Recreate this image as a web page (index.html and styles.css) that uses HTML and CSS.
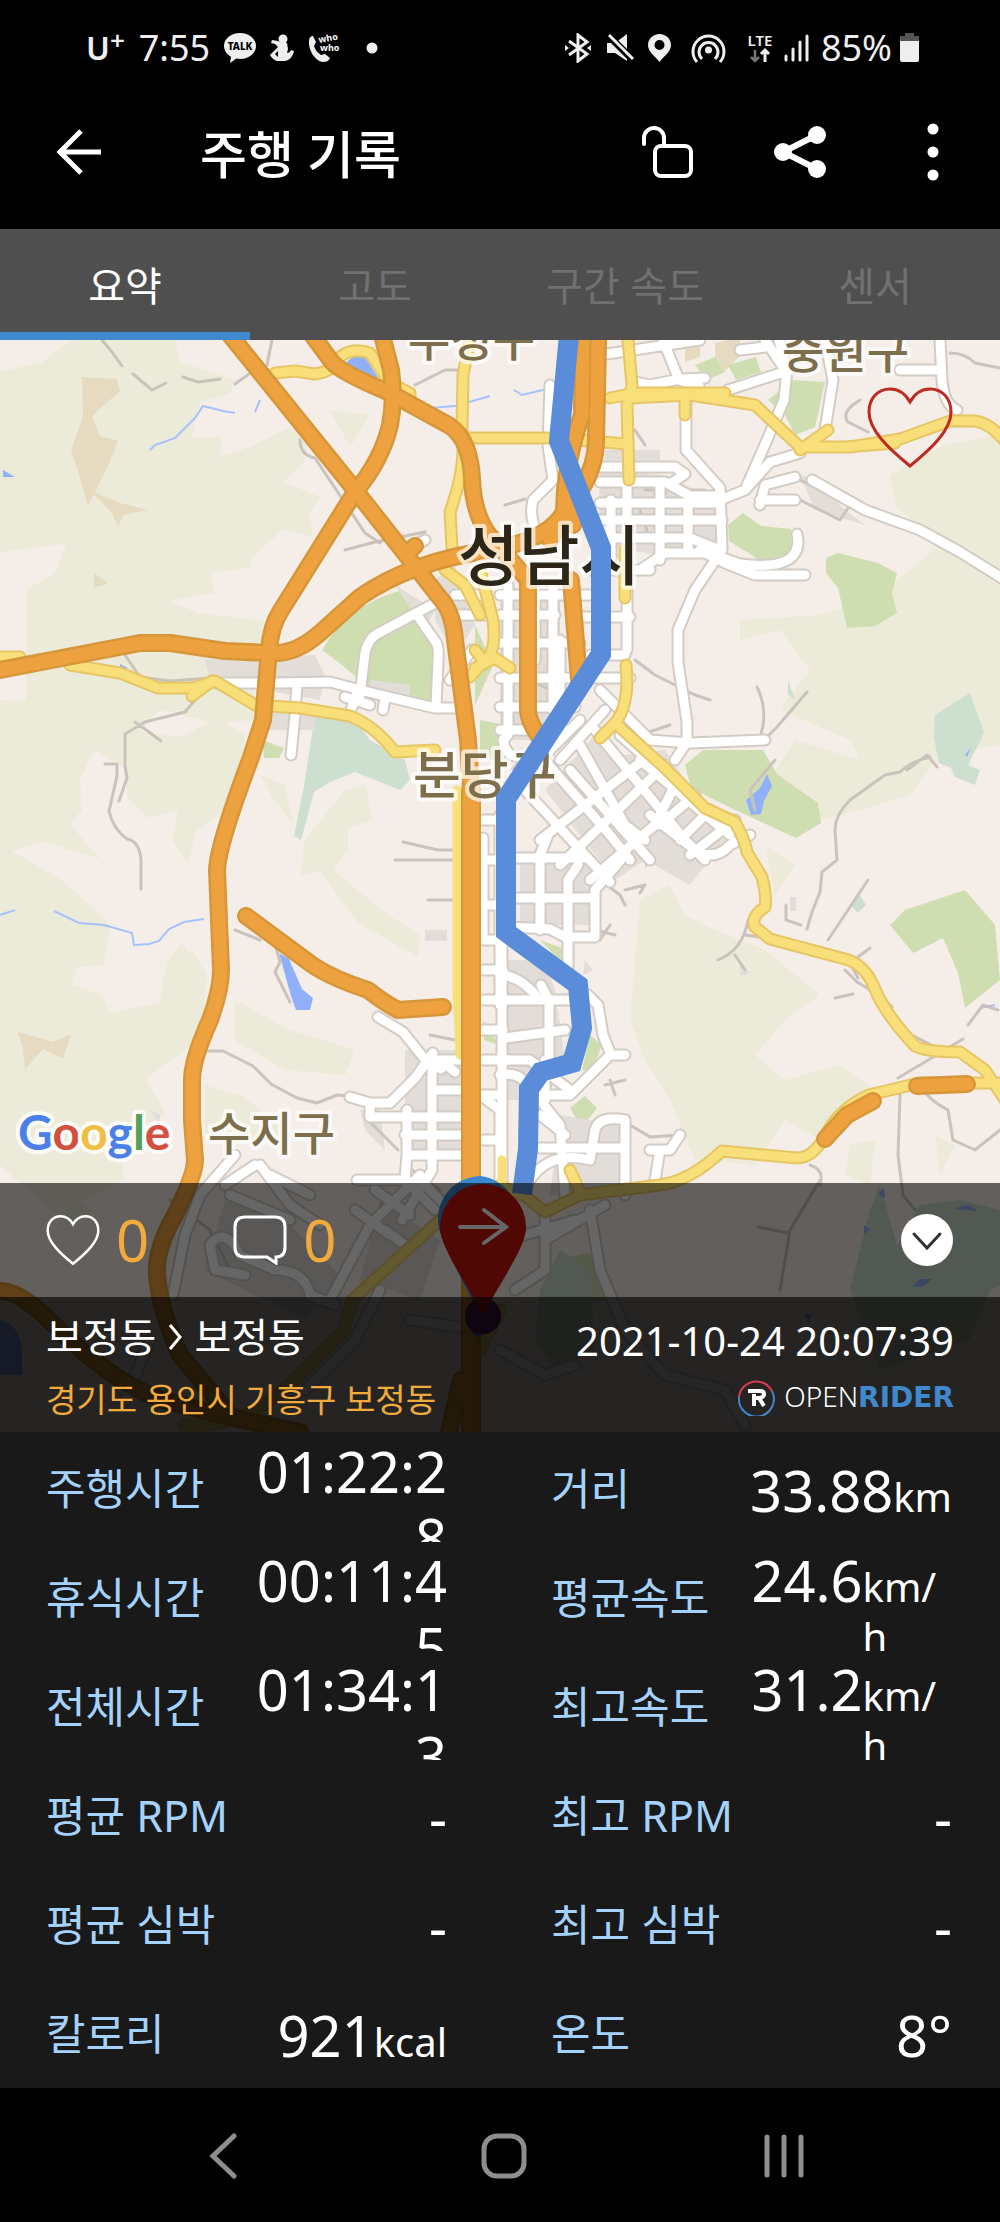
FILE: index.html
```html
<!DOCTYPE html>
<html lang="ko">
<head>
    <meta charset="UTF-8">
    <meta name="viewport" content="width=device-width, initial-scale=1.0">
    <title>주행 기록</title>
    <link rel="stylesheet" href="styles.css">
</head>
<body>
    <div class="status-bar">
        <div class="status-left">
            <span class="carrier">U<sup>+</sup></span>
            <span class="status-text">7:55</span>
            <svg width="32" height="30" viewBox="0 0 32 30">
                <path fill="#eee" d="M16 0C7 0 0 5.600 0 13c0 4.600 2.800 8.500 7 10.800L6 30l6.500-4.400c1.100.2 2.300.3 3.500.3 9 0 16-5.600 16-12.900S25 0 16 0z"/>
                <text class="talk-text" x="16" y="17" text-anchor="middle">TALK</text>
            </svg>
            <svg width="24" height="28" viewBox="0 0 24 28" fill="#eee">
                <circle cx="13" cy="5" r="4.500"/>
                <path d="M10 8l7 1 1 6-1 4c2 0 3-1 4-3l3 1c-1 5-4 9-9 10H7c-3-1-6-4-7-6l8-8-3-3-4-1 1-3 6 1z"/>
                <path fill="#000" d="M5 20l3-3v6z"/>
            </svg>
            <svg width="34" height="28" viewBox="0 0 34 28">
                <path fill="#eee" d="M1 6c0-2 2-4 4-4l3 6-2 4c1 4 4 7 7 9l4-1 5 4c-1 3-4 4-7 4C7 27 0 16 1 6z"/>
                <text class="who-text" x="11" y="9" transform="rotate(-10 11 9)">who</text>
                <text class="who-text" x="12" y="17">who</text>
            </svg>
            <svg width="22" height="28" viewBox="0 0 22 28"><circle cx="16" cy="14" r="5.500" fill="#eee"/></svg>
        </div>
        <div class="status-right">
            <svg width="32" height="30" viewBox="0 0 32 30" fill="none" stroke="#eee" stroke-width="3">
                <path d="M4 8l18 13-9 7V2l9 7L4 22"/>
                <path d="M0 12l4 3-4 3zM26 12l-4 3 4 3z" fill="#eee" stroke="none"/>
            </svg>
            <svg width="31" height="30" viewBox="0 0 31 30" fill="#eee">
                <path d="M0 10h8l12-9v27L8 20H0z"/>
                <path d="M1 2l25 25" stroke="#000" stroke-width="7"/>
                <path d="M2 2l24 24" stroke="#eee" stroke-width="3"/>
            </svg>
            <svg width="33" height="30" viewBox="0 0 33 30"><path fill="#eee" fill-rule="evenodd" d="M11.500 1C5 1 0 6 0 12c0 7 7 11 11.500 17C16 23 23 19 23 12 23 6 18 1 11.500 1zm0 6a5 5 0 1 1 0 10 5 5 0 0 1 0-10z"/></svg>
            <svg width="46" height="32" viewBox="0 0 46 32" fill="none" stroke="#eee" stroke-width="3">
                <path d="M6 30a15.500 15.500 0 1 1 23 0"/>
                <path d="M11 27a9.500 9.500 0 1 1 13 0"/>
                <circle cx="17.500" cy="18" r="3.500" fill="#eee" stroke="none"/>
            </svg>
            <svg width="27" height="32" viewBox="0 0 27 32">
                <text class="lte-text" x="13" y="14" text-anchor="middle">LTE</text>
                <path d="M8 18v10M4 25l4 4 4-4" fill="none" stroke="#777" stroke-width="2.500"/>
                <path d="M18 30V19M14 22l4-4 4 4" fill="none" stroke="#eee" stroke-width="3"/>
            </svg>
            <svg width="27" height="28" viewBox="0 0 27 28" stroke="#eee" stroke-width="3" stroke-linecap="round">
                <path d="M2 26v-4M9 26V15M16 26V8M23 26V2"/>
            </svg>
            <span class="battery">
                <span class="status-text">85%</span>
                <svg width="19" height="29" viewBox="0 0 19 29">
                    <path fill="#555" d="M5 0h9v3h5v5H0V3h5z"/>
                    <path fill="#eee" d="M0 8h19v19a2 2 0 0 1-2 2H2a2 2 0 0 1-2-2z"/>
                </svg>
            </span>
        </div>
    </div>

    <header class="app-bar">
        <button class="icon-btn back" aria-label="뒤로">
            <svg width="46" height="46" viewBox="0 0 46 46" fill="none" stroke="#fff" stroke-width="5"><path d="M25 2L4 23l21 21M4 23h41"/></svg>
        </button>
        <h1 class="title">주행 기록</h1>
        <button class="icon-btn" aria-label="잠금">
            <svg width="52" height="52" viewBox="0 0 52 52" fill="none" stroke="#fff" stroke-width="4" stroke-linecap="round">
                <path d="M3 18v-6a9.500 9.500 0 0 1 20 0v8"/>
                <rect x="14" y="20" width="36" height="30" rx="6"/>
            </svg>
        </button>
        <button class="icon-btn" aria-label="공유">
            <svg width="52" height="52" viewBox="0 0 52 52" fill="#fff">
                <path d="M43 9L9 26l34 17" fill="none" stroke="#fff" stroke-width="6"/>
                <circle cx="9" cy="26" r="9"/><circle cx="43" cy="9" r="9"/><circle cx="43" cy="43" r="9"/>
            </svg>
        </button>
        <button class="icon-btn" aria-label="더보기">
            <svg width="52" height="58" viewBox="0 0 52 58" fill="#fff"><circle cx="26" cy="6" r="5.500"/><circle cx="26" cy="29" r="5.500"/><circle cx="26" cy="52" r="5.500"/></svg>
        </button>
    </header>

    <nav class="tabs">
        <button class="tab active">요약</button>
        <button class="tab">고도</button>
        <button class="tab">구간 속도</button>
        <button class="tab">센서</button>
    </nav>

    <main>
        <section class="map">
            <svg class="map-canvas" viewBox="0 340 1000 1092" preserveAspectRatio="xMidYMid slice">
                <defs>
                    <g id="minor">
                        <path d="M102 340l10 12 10 14M133 374l19 16 14-7M183 377l15 5 22-3M235 384l14-10M272 340l-5 25M345 550l30-8 50-10M300 440q0 15 15 18l20 30 30 45 15 10M125 655l15 22 30 4 40-3M195 700l-10 12-40 10-20 12v32l2 12-8 23M135 722l14 10 12 9M105 764h12v12l-8 35q4 18 18 28 12 2 14 20v30M205 1051h18l30 15 18 18 26 14 20 5 20-8 15 1M415 385l30-15h15M403 842l35 8h20M428 900h25M430 1035l25 5M275 944l5 18-5 10 15 30M235 930l25 10M505 505l20-6M860 400q-20 12-12 22l20 10M950 353q15 0 25 10l25 5M635 430l10 15M790 495l50 25 10-15-50-25M635 660l20 15 40 20 15 5M757 687q12 25 3 50M807 692l-30 35-15 15M907 770l20-15 10 12M775 760l-25 30 5 20M930 757q-20 5-30 15l-15 3-35 25q-15 15-15 30l2 30-15 12-2 20-8 20-5 17M868 880l-40 60M786 905v15l15 5M748 920q-5 30-30 40M745 935l20 3M735 955l10 15M845 970l12 12 25 15 10 10M835 998l18-4M870 948l-20 15 8 15M903 1025l5 8 35 18 20-12M940 1053l-42 25M968 1025l15-20 15 5M920 1085q8 15 28 25l5 30 22 10 25-20M900 1095l-2 60 5 40 12 15M810 1165q15 5 10 20M600 880l20 15 5 10M625 890l20-5-5 8M600 940l10-15M595 930l20 5M610 1080l5 15M605 1085l20-5M630 1125l20 12 30-2M820 1180l-30 50-10 60M758 1227l30 6M170 1200l40 30 20 40M395 860h60M405 1165l35 25M368 1120l30 30M520 940l20 10M530 680l30 15M640 735l30-10M645 490h60M640 510l10 30"/>
                    </g>
                    <g id="streets">
                        <path d="M215 683h60l55-1 50 13 55 13h20M360 695l5-42q3-14 12-19l60-32M417 615l18 26q4 4 3 20l-2 45M297 683l-2 32-4 40M358 690l-7 20M385 698l-2 12M345 697l25 8M450 680l22-30M425 540l-15 7M455 595h30M450 615h35"/>
                        <path d="M508 585v150l-5 5q4 20 18 15M553 585v125M500 595h90M500 615h55M500 643h80M500 678h130M500 707h75M500 730h65M535 590v70M560 640v90"/>
                        <path d="M600 467h75l10 7-12 8M600 482h65l25 14h30M600 503h120M600 520h122M600 538h90l25 10M627 480v60M660 485v75M688 503v50M611 500v60M590 570h60M627 590v60M580 617h50M590 655h35"/>
                        <path d="M686 400v50l34 38 2 62-27 40-17 40v32l9 60v20l-12 18M720 500l25-10 22-50 17-40 3-30-8-30M745 490l25-28 30-9M760 505l5-20 30-8M760 500h35M812 480l53 30 55 20 40 22 45 28M640 570l25-17h40l20 10 30 12h50M700 550l40 14q65 8 57-30M663 340l16 40 20 6M635 382l15 3 30-6 25-1M600 355l100-15M728 390l62-20M740 350l25-3M765 340l20 30M825 340l8 40-8 50M940 340l2 40q2 25 15 30M900 370h40M550 385l-2 60 5 35-20 20q-5 20 8 40"/>
                        <path d="M650 740l40 3 75-3M525 790l85 92M540 755l70 80 20 25M580 745l45 80 20 15M595 730l90 110 20 20M620 735l80 70M540 840l110-85M560 865l105-100M590 880l65-55 20-40M515 775l60-80M570 770l80 90M640 760l90 75M600 690l50 50M650 815l45 35q20 12 35-5l20-10M660 825l35-30M680 840l30-30M690 855l45-35M580 720l-60 60M605 710l-45 50"/>
                        <path d="M510 858h75M510 898h85M510 927l40 2 15 8h30M540 930v-75l8-20M568 970V880l10-15M595 935v-45l30-35M502 940v250M500 975q20 0 40 25h30M549 1060v-60l-8-15M505 1000h35M505 1038l60-8M505 1060h25l40 30M500 1075q25-5 30 20h40l40-40h15M588 995l10 10 5 30 8 20M540 1100l20 25 5 70M590 1160l5-30q4-15 30-10v75M540 1148h85M530 1180q20-30 60-20M540 1115l25 20M650 1150h20l10-15M655 1180l5-30M545 1060v40"/>
                        <path d="M483 820h20M500 815v190M483 838v100M483 860h25M483 905h20M483 940h20M483 970h20M483 1000h20M483 1030h20M483 1060h25M480 1095l20 15v80"/>
                        <path d="M378 1017l25 15 20 25 18 12M350 1097l20 6h20l25-25 18-25M370 1105v12h90M430 1060h30M432 1070v100l-30 50M407 1110v45l-2 25 30 30M405 1135h55M410 1155h50M435 1090h25M440 1060l15 12M357 1180h50M483 1095h15M483 1140h15"/>
                        <path d="M235 1155l-35 40-15 40-12 60M260 1165l30 40 30 20M225 1185l30-20M230 1195l60 25M270 1175l40 20M210 1245q15-20 30 10l35 15q30 0 35 25l25 10M210 1245l5 25 30 5M330 1300l40-75 50-50M355 1210l35 25M375 1190l35 25M385 1230l20 15M420 1180l30 30M545 1210v60l-30 20M545 1240l60-35M590 1210l10 60 25 60 40 45 60 15 20 35M500 1350l45 25 30-10M575 1220l-50 15M380 1290l-25 50-50 50M150 1340l-25 60M480 1330l-70-10"/>
                    </g>
                    <g id="arterials">
                        <path d="M0 657h20M70 665l50 8q35 14 38 15h35l22-7 40 24 45 3 50 8q25 10 45 36l40-2"/>
                        <path d="M192 696l20-15M475 668l20-10 15 10M475 650l8 10"/>
                        <path d="M275 373l20-2 20 3q18-2 25-17 12-10 30-4l20 30 20 10v10"/>
                        <path d="M470 340l-7 35-1 55q5 35-12 82l2 35M465 438h85l78 6"/>
                        <path d="M628 340l4 45-5 20 2 75M610 398l25-5h90M630 398l60-3 65 10 45 42h50l50-8 50-18h25q15 2 30 20M685 395v20M800 450l28-20M845 447l50-4"/>
                        <path d="M625 550v48M626 665q4 40-11 58l-15 15M615 723l50 45 40 40 30 14q10 18 12 30l15 25q5 20 3 30-15 10-10 20l15 12 75 20q20 5 30 30 10 25 40 57 10 6 45 6l25 18 20 30"/>
                        <path d="M520 1192l25 20 35-17 80-10q30-4 62-34l75 7q15 0 27-20 15-30 45-43l50-12h85M570 1170l10 22"/>
                        <path d="M480 570l13 50q4 35-10 42l-13 15M445 570l20 15 15 30"/>
                        <path d="M440 1220l-55 50-33 30-8 30-50 50q-50 50-110 45M500 1185l20 10M500 1310l-20 40"/>
                    </g>
                    <g id="highways">
                        <path d="M230 335l125 155 85 108q13 14 15 42l13 100 3 50v642"/>
                        <path d="M382 335l9 35q4 30-1 55-8 35-35 67l-75 120q-9 14-11 38l-6 70-13 40q-32 85-33 110l4 100q0 20-11 50-18 40-18 60v40l3 40q0 15-20 55-20 35-18 60 3 35 23 80l50 60"/>
                        <path d="M312 335l20 27q8 10 58 31l60 33q20 14 22 52 1 35 17 57l39 45v130q0 10 10 25"/>
                        <path d="M0 670l140-27h30l55 8 45 2q25 2 50-20l40-36q50-35 130-47 60-10 75-40M410 550l5-4"/>
                        <path d="M583 340l-1 75q-18 50-18 100l-14 25M598 340l-2 100q0 25-15 50l-8 35M571 580l8 100"/>
                        <path d="M246 916l65 48q20 14 57 26 15 12 30 20l45-3"/>
                        <path d="M825 1139l22-24 26-14M917 1086l50-2"/>
                        <path d="M0 1291q20 0 50 30 60 60 110 78 50 15 140 33M461 1380l-12 52"/>
                    </g>
                </defs>

                <rect class="land" y="340" width="1000" height="1092"/>
                <g class="hills">
                    <path d="M0 372l42-10 30-22h103l5 22 55 18-5 14-30 8-8 35 30 0-2 20 30-10 40-20 18 15-5 22-20 18 38 15-12 16 5 24-30-8-32 28-2 10-40 6 4 20-45 8 30 12 65 8-2 20-16 28 10 30 8 20-48 4-60-14-50 12-80 16V590l30-18 10-28L0 552z"/>
                    <path d="M0 700l55 2 55-12 50 18-20 24 40 5 40-20 25 20-5 50-24 30-20 15-8 32-16-24 6-30-30 8-20-20-4-30-30-18-14 30 2 30-12 14 30 35-58-18-30 10 48 28 30 26 20 20-6 40-24 2-40-20-16 0-28 18L0 900z"/>
                    <path d="M0 915l18 20 50 0 12 24-8 26 30 10 8 18 50-10 6-40 16-20 20 30-6 30 10 30-20 16-40 30 20 35-26 16-18 32 2 18-44 22 16 12-30 10L0 1165z"/>
                    <path d="M260 775l25 10 8 40-22-30zM330 410l40 5-20 32zM305 840l40-50 20-5 8 35-25 8 0 22-15 20 55 45 32 20-2 22-60-34-38-52-20 5z"/>
                    <path d="M172 970l20-20 15 25-5 50-20 10zM235 1000l55 30 65 20-10 25-60-5-50-30zM205 1085l40 12 40 35-55 15-25-15z"/>
                    <path d="M740 620l80-5 60-20 60-50-45-40-5-30 55-30 55-10v310l-60 10-30 40-50 15-60 15-30-45 25-40 65 20-10-20-70-30 30-40-30-40-40 10z"/>
                    <path d="M675 895l10 20 30 15 50 20 55 45-30 20-35 40 30 25 55-15 35 25-10 20-45 30-35-20-30 45-60-5-25-60-25-40-15-40 10-120 28-15zM765 845l30 20-20 30zM850 1145l25-5-5 45-25-10zM935 1135l20 10-15 30z"/>
                </g>
                <g class="peaks">
                    <path d="M82 377l35 2 3 12-28 25 8 20 18 5-10 25-10 20-10 20-10-35-7-20 12-35zM90 490l30 13 28 7-25 5-5 12-6-14zM94 573l14 10-14 5zM18 1032l35 10 18-8-8 25-20-10-18 20-2-20zM715 343l25-5v18l-15 15-10-10zM685 350l15-8v15l-15 5z"/>
                </g>
                <g class="parks">
                    <path d="M322 650q25-45 80-60l25 25 15 50-5 40-60-10-35-30zM262 740l22 8-5 10h-15zM475 625l18 40-18 40zM480 720l25 5v40l-25-10zM695 365l20-8 10 15-18 8zM728 365l28-8 5 15-25 8zM768 400l25-20 32 2-10 45-20 8-10-20zM728 525l15-12 18 13 30 3v25l-30 7-32-20zM826 558l12-5 40 10 19 10-5 20 5 20-22 13-28 2-9-40-12-15zM685 765l18-15h60l15 25 40 28 3 20-25 15-65-30-40-20zM890 925l15-15 60-20 30 35 5 55-35 28-7-35-15-35-30 15z"/>
                    <path d="M575 770l45 35-5 20-25-10-15-30zM540 940l22 8v15zM590 1035l-8 35h10l10-25zM570 1108l15-12 12 12-15 20zM645 850l12 10-12 8zM560 1180h25l-10 10zM483 1020l16 25-15-5zM555 1260l45-10 10 50-30 5z"/>
                </g>
                <g class="reserves">
                    <path d="M315 715l40 5 15 20 35 20 5 20-10 10-45-18-25 10-16 10-13 48-7-4 10-50zM935 715l35-22 14 40-20 40-25-10-5-25zM788 680l7 20-7-5zM850 905l10-10 6 10-8 8zM945 755l35 15-5 15-20-8zM850 1290l20-80 10-25 20 70-20 20 40-70 40-5 80 20v50l-50 20-20 50-90 30zM540 1290l20-40 30 20 5 80-40 20-20-30z"/>
                </g>
                <g class="water">
                    <path d="M345 365q7-12 20-8l14 22zM3 470l12 7H3zM120 664l8 4-8 4zM279 953l10 6 13 30 11 9-3 12h-14l-5-14zM746 800l14-12 7-14 5 12-8 15-3 13-10 1zM965 755l6-7-4 9z"/>
                    <path d="M955 1209q15-8 22 2zM878 1194l6-6 1 10zM864 1225l6 4-6 5zM912 1286l8-7h12l-10 8zM0 1320q22 5 22 35v20H0zM805 1314h7l-4 10z"/>
                    <path class="stream" d="M150 450l5-5 20-7 20-20 8-12 20 5 12 2M255 412l5-12M430 408l25-2 35-10M514 390l8 5 25-6M0 915l15-5M54 911l25 12 25 2 28 8 2 12 15-1 10-3 10-12 15-7 20-3M277 691l5 1M308 692l10-3M980 1008l15-3"/>
                </g>
                <g class="blocks">
                    <path d="M205 660l110-5 10 20-5 25-110-20zM395 585l40 25-10 20zM260 700l55 10v20h-50zM370 680l40 5v15l-40-8zM435 580l20-15 20 60-20 30-20-35zM500 590h60v150h-60zM605 450h55v10h-55zM600 470l60 5 60 25-2 40-60 15-60-10zM800 475l15 5 30 30 20 15-50-15zM520 860h75v65h-75zM545 790l70 90 30-20 45 25 35-45-60-90-40 5-30-20zM505 960h40l10 30 10 70-20 40h-40zM405 1050h58v110h-58zM360 1110h20l5 40-20-20zM560 1115l60 10v70h-70z"/>
                    <path d="M425 930h22v11h-22zM585 960l8 10-10 5zM790 897h6v14h-6zM740 965l10 8-10 3zM150 1110l10 5v12zM855 1320l15 5z"/>
                    <path d="M225 1200l60 20 60 60-40 40-60-30-40-20zM380 1200l60 40-20 60-60-20z"/>
                </g>

                <use class="minor" href="#minor"/>
                <use class="streets-case" href="#streets"/>
                <use class="streets" href="#streets"/>
                <use class="arterials-case" href="#arterials"/>
                <use class="arterials" href="#arterials"/>
                <path class="arterials" d="M457 790v205q2 30 3 60M502 1160v30"/>
                <use class="highways-case" href="#highways"/>
                <path class="trunk-case" d="M471 790v642"/>
                <use class="highways" href="#highways"/>
                <path class="trunk" d="M471 790v642"/>

                <g class="place district">
                    <text x="408" y="356">수정구</text>
                    <text x="782" y="368">중원구</text>
                    <text class="bundang" x="413" y="794">분당구</text>
                    <text x="208" y="1150">수지구</text>
                </g>
                <text class="place city" x="458" y="580">성남시</text>

                <path class="route" d="M569 335l-10 106 42 107v106L506 799v133l72 53 4 43-10 35-31 9-12 17-1 60-6 45"/>

                <g class="pins">
                    <path fill="#3a88cf" d="M480 1176a43 43 0 0 0-40 56q5 15 38 80 32-65 38-80a43 43 0 0 0-36-56z"/>
                    <ellipse cx="478" cy="1320" rx="9" ry="17" fill="#3a88cf"/>
                    <circle cx="483" cy="1316" r="18" fill="#5c2270"/>
                    <path fill="#c8140c" d="M483 1184a43 43 0 0 0-43 44c0 20 30 60 43 88 13-28 43-68 43-88a43 43 0 0 0-43-44z"/>
                    <path d="M460 1227h46M484 1210l22 17-22 16" fill="none" stroke="#fff" stroke-width="4" stroke-linecap="round"/>
                </g>

                <text class="google" x="18" y="1150"><tspan fill="#4b80e8">G</tspan><tspan fill="#d34f40">o</tspan><tspan fill="#f0be42">o</tspan><tspan fill="#4b80e8">g</tspan><tspan fill="#52a05a">l</tspan><tspan fill="#d34f40">e</tspan></text>
            </svg>

            <button class="icon-btn favorite" aria-label="즐겨찾기">
                <svg width="86" height="81" viewBox="0 0 86 81" fill="none" stroke="#bd2a20" stroke-width="3"><path d="M43 15C38 6 31 2 23 2 11 2 2 11 2 25c0 18 19 36 41 54 22-18 41-36 41-54C84 11 75 2 63 2c-8 0-15 4-20 13z"/></svg>
            </button>

            <div class="overlay">
                <div class="reactions">
                    <button class="reaction">
                        <svg width="54" height="50" viewBox="0 0 86 81" fill="none" stroke="#fff" stroke-width="4"><path d="M43 15C38 6 31 2 23 2 11 2 2 11 2 25c0 18 19 36 41 54 22-18 41-36 41-54C84 11 75 2 63 2c-8 0-15 4-20 13z"/></svg>
                        <span>0</span>
                    </button>
                    <button class="reaction">
                        <svg width="54" height="50" viewBox="0 0 54 50" fill="none" stroke="#fff" stroke-width="3"><path d="M12 2h30q10 0 10 10v20q0 10-9 10v6l-9-6H12Q2 42 2 32V12Q2 2 12 2z"/></svg>
                        <span>0</span>
                    </button>
                    <button class="icon-btn collapse" aria-label="접기">
                        <svg width="52" height="52" viewBox="0 0 52 52"><circle cx="26" cy="26" r="26" fill="#fff"/><path d="M13 20l13 14 13-14" fill="none" stroke="#333" stroke-width="3" stroke-linecap="round"/></svg>
                    </button>
                </div>
                <div class="ride-info">
                    <div>
                        <div class="places">
                            <span>보정동</span>
                            <svg width="14" height="26" viewBox="0 0 14 26" fill="none" stroke="#fff" stroke-width="3"><path d="M2 1l10 12L2 25"/></svg>
                            <span>보정동</span>
                        </div>
                        <div class="address">경기도 용인시 기흥구 보정동</div>
                    </div>
                    <div class="ride-meta">
                        <time class="date">2021-10-24 20:07:39</time>
                        <div class="brand">
                            <svg width="38" height="38" viewBox="0 0 38 38" fill="none" stroke-width="2">
                                <path stroke="#4288cc" d="M35 13A17.500 17.500 0 1 1 2 19"/>
                                <path stroke="#d83a55" d="M2 19A17.500 17.500 0 0 1 35 13"/>
                                <path stroke="#fff" stroke-width="4" d="M11 13h12q4 0 4 3t-4 4h-6M17 16v12M22 20l5 8"/>
                            </svg>
                            <span class="brand-name">OPEN<b>RIDER</b></span>
                        </div>
                    </div>
                </div>
            </div>
        </section>

        <dl class="stats">
            <div class="stat"><dt>주행시간</dt><dd><span class="time">01:22:28</span></dd></div>
            <div class="stat"><dt>거리</dt><dd><span>33.88</span><span class="unit">km</span></dd></div>
            <div class="stat"><dt>휴식시간</dt><dd><span class="time">00:11:45</span></dd></div>
            <div class="stat"><dt>평균속도</dt><dd><span>24.6</span><span class="unit">km/<wbr>h</span></dd></div>
            <div class="stat"><dt>전체시간</dt><dd><span class="time">01:34:13</span></dd></div>
            <div class="stat"><dt>최고속도</dt><dd><span>31.2</span><span class="unit">km/<wbr>h</span></dd></div>
            <div class="stat"><dt>평균 RPM</dt><dd>-</dd></div>
            <div class="stat"><dt>최고 RPM</dt><dd>-</dd></div>
            <div class="stat"><dt>평균 심박</dt><dd>-</dd></div>
            <div class="stat"><dt>최고 심박</dt><dd>-</dd></div>
            <div class="stat"><dt>칼로리</dt><dd><span>921</span><span class="unit">kcal</span></dd></div>
            <div class="stat"><dt>온도</dt><dd>8°</dd></div>
        </dl>
    </main>

    <nav class="system-nav">
        <button class="icon-btn" aria-label="이전">
            <svg width="46" height="46" viewBox="0 0 46 46"><path d="M33 3L12 23l21 20"/></svg>
        </button>
        <button class="icon-btn" aria-label="홈">
            <svg width="46" height="46" viewBox="0 0 46 46"><rect x="3" y="3" width="40" height="40" rx="13"/></svg>
        </button>
        <button class="icon-btn" aria-label="최근 앱">
            <svg width="46" height="46" viewBox="0 0 46 46"><path d="M6 4v38M23 4v38M40 4v38"/></svg>
        </button>
    </nav>
</body>
</html>
```

FILE: styles.css
```css
* {
    box-sizing: border-box;
}

body {
    margin: 0;
    background-color: #000;
    color: #fff;
    font-family: "Noto Sans", "Noto Sans CJK KR", sans-serif;
}

button {
    margin: 0;
    padding: 0;
    border: none;
    background: none;
    color: inherit;
    font: inherit;
    cursor: pointer;
}

svg {
    display: block;
    flex-shrink: 0;
}

/* status bar */
.status-bar {
    display: flex;
    justify-content: space-between;
    align-items: center;
    height: 92px;
    padding: 3px 81px 0 86px;
    color: #eee;
}

.status-left {
    display: flex;
    align-items: center;
    gap: 14px;
}

.status-right {
    display: flex;
    align-items: center;
    gap: 10px;
}

.status-text {
    font-size: 36px;
    line-height: 40px;
}

.battery {
    display: flex;
    align-items: center;
    gap: 8px;
}

.carrier {
    font-size: 32px;
    font-weight: 600;
    line-height: 40px;
}

.carrier sup {
    font-size: 26px;
    line-height: 0;
    vertical-align: 10px;
}

.talk-text {
    font-size: 10px;
    font-weight: 800;
    fill: #000;
}

.who-text {
    font-size: 9px;
    font-weight: 800;
    fill: #eee;
}

.lte-text {
    font-size: 15px;
    font-weight: 600;
    fill: #eee;
}

/* header */
.app-bar {
    display: flex;
    align-items: center;
    gap: 81px;
    height: 137px;
    padding: 0 41px 17px 56px;
}

.icon-btn {
    display: block;
}

.title {
    flex: 1;
    margin: 0 0 0 17px;
    padding-top: 3px;
    font-size: 51px;
    font-weight: 500;
    line-height: 72px;
}

/* tabs */
.tabs {
    display: grid;
    grid-template-columns: repeat(4, 1fr);
    background-color: #4f4f4f;
}

.tab {
    height: 111px;
    border-bottom: 8px solid transparent;
    padding-top: 11px;
    color: #717171;
    font-size: 40px;
    line-height: 56px;
}

.tab.active {
    border-bottom-color: #4189cd;
    color: #fff;
}

/* map: canvas, favorite button and overlay share one grid cell */
.map {
    display: grid;
    background-color: #f5eee8;
}

.map > * {
    grid-area: 1 / 1;
}

.map-canvas {
    width: 100%;
}

.land {
    fill: #f5eee8;
}

.hills {
    fill: #ecead8;
}

.peaks {
    fill: #e6dac0;
}

.parks {
    fill: #cfdeb0;
}

.reserves {
    fill: #cddfce;
}

.water {
    fill: #90b1fa;
}

.stream {
    fill: none;
    stroke: #a5c2fb;
    stroke-width: 2;
}

.blocks {
    fill: #e2ddd9;
}

.minor,
.streets,
.streets-case,
.arterials,
.arterials-case,
.highways,
.highways-case,
.trunk,
.trunk-case {
    fill: none;
    stroke-linecap: round;
    stroke-linejoin: round;
}

.minor {
    stroke: #c9c3bc;
    stroke-width: 3;
}

.streets-case {
    stroke: #d3ccc4;
    stroke-width: 13;
}

.streets {
    stroke: #fff;
    stroke-width: 9;
}

.arterials-case {
    stroke: #e6c565;
    stroke-width: 13;
}

.arterials {
    stroke: #f8df7a;
    stroke-width: 9;
}

.highways-case {
    stroke: #d6963a;
    stroke-width: 18;
}

.highways {
    stroke: #eea13f;
    stroke-width: 13;
}

.trunk-case {
    stroke: #d6963a;
    stroke-width: 20;
}

.trunk {
    stroke: #eea13f;
    stroke-width: 16;
}

.place {
    paint-order: stroke;
    stroke: rgba(255, 255, 255, 0.7);
    stroke-width: 8px;
    stroke-linejoin: round;
    font-weight: 500;
}

.district {
    font-size: 46px;
    fill: #7d6f4c;
}

.bundang {
    font-size: 52px;
}

.city {
    font-size: 66px;
    fill: #2b2618;
}

.route {
    fill: none;
    stroke: #5b8cd9;
    stroke-width: 20;
}

.google {
    font-family: Lato, sans-serif;
    font-size: 48px;
    font-weight: 700;
    paint-order: stroke;
    stroke: rgba(255, 255, 255, 0.8);
    stroke-width: 8px;
    stroke-linejoin: round;
}

.favorite {
    align-self: start;
    justify-self: end;
    margin: 47px 47px 0 0;
}

.overlay {
    align-self: end;
}

.reactions {
    display: flex;
    align-items: center;
    gap: 84px;
    height: 114px;
    padding: 0 47px 0 46px;
    background-color: rgba(0, 0, 0, 0.6);
}

.reaction {
    display: flex;
    align-items: center;
    gap: 16px;
    color: #f0ab3c;
    font-size: 58px;
    line-height: 66px;
}

.collapse {
    margin-left: auto;
}

.ride-info {
    display: flex;
    justify-content: space-between;
    padding: 12px 46px 8px;
    background-color: rgba(0, 0, 0, 0.85);
}

.places {
    display: flex;
    align-items: center;
    gap: 12px;
    font-size: 40px;
    line-height: 56px;
}

.address {
    margin-top: 11px;
    color: #f0ab3c;
    font-size: 33px;
    line-height: 48px;
}

.ride-meta {
    display: flex;
    flex-direction: column;
    align-items: flex-end;
    gap: 3px;
}

.date {
    font-size: 40px;
    line-height: 64px;
}

.brand {
    display: flex;
    align-items: center;
    gap: 9px;
}

.brand-name {
    font-size: 28px;
    font-weight: 300;
    line-height: 40px;
}

.brand-name b {
    color: #4189cd;
    font-family: "DejaVu Sans", sans-serif;
    font-weight: 700;
}

/* stats */
.stats {
    display: grid;
    grid-template-columns: 1fr 1fr;
    gap: 3px 104px;
    margin: 0;
    padding: 4px 48px 1px 46px;
    background-color: #191919;
}

.stat {
    display: flex;
    justify-content: space-between;
    align-items: center;
    height: 106px;
}

.stat dt {
    color: #a5d2fa;
    font-size: 43px;
    line-height: 60px;
    white-space: nowrap;
}

.stat dd {
    display: flex;
    justify-content: flex-end;
    align-items: baseline;
    width: 50%;
    max-height: 106px;
    margin: 0;
    padding-top: 2px;
    overflow: hidden;
    font-size: 56px;
    line-height: 67px;
    text-align: right;
}

.time {
    word-break: break-all;
}

.unit {
    font-size: 40px;
    line-height: 50px;
    text-align: left;
}

/* system navigation */
.system-nav {
    display: flex;
    justify-content: center;
    align-items: center;
    gap: 234px;
    height: 135px;
    padding-left: 8px;
}

.system-nav svg {
    fill: none;
    stroke: #8e8e8e;
    stroke-width: 5;
    stroke-linecap: round;
}
```
